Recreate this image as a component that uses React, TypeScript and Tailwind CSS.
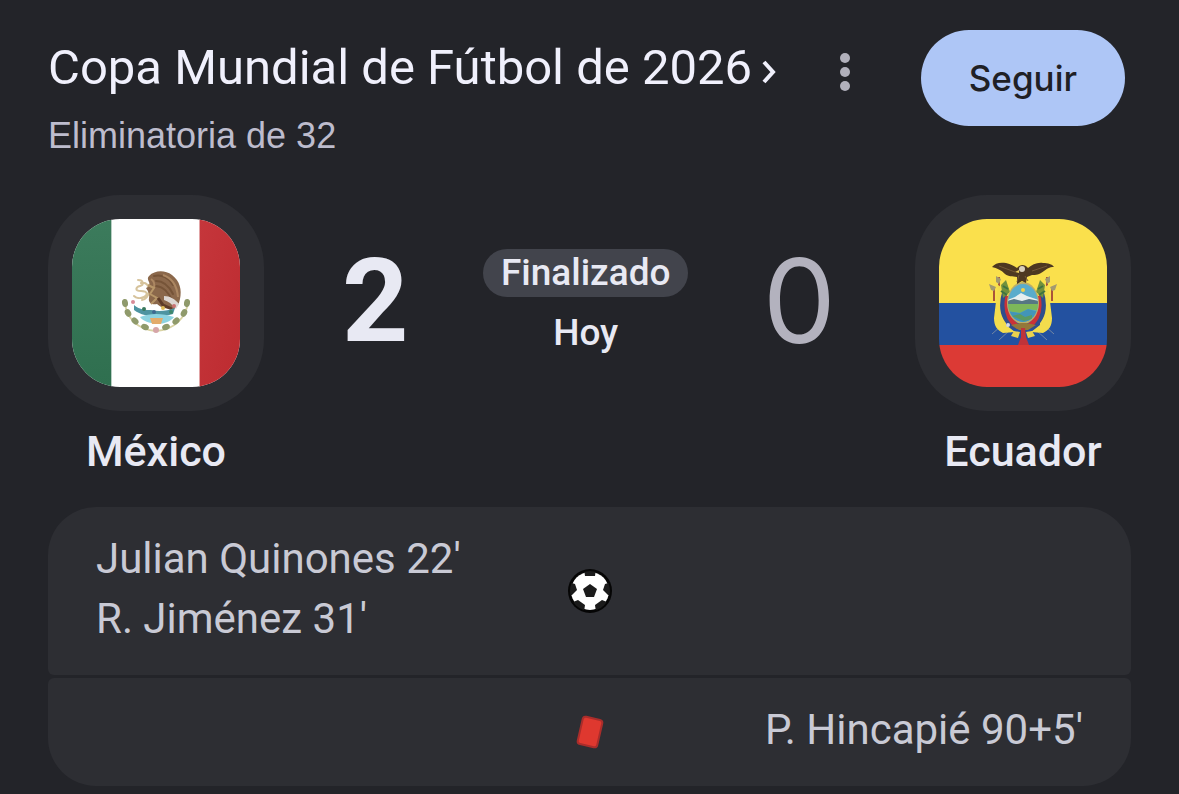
import type { ReactNode } from 'react'

interface MatchEvent {
  id: string
  home: string[]
  away: string[]
  icon: ReactNode
}

function MexicoFlag() {
  return (
    <svg viewBox="0 0 168 168" className="size-full" role="img" aria-label="Bandera de México">
      <defs>
        <linearGradient id="mx-green" x1="0" y1="0" x2="0" y2="1">
          <stop offset="0" stopColor="#3c7b5c" />
          <stop offset="1" stopColor="#2f6f4f" />
        </linearGradient>
        <linearGradient id="mx-red" x1="0" y1="0" x2="1" y2="1">
          <stop offset="0" stopColor="#c5363b" />
          <stop offset="1" stopColor="#bd2b30" />
        </linearGradient>
      </defs>
      <rect width="168" height="168" fill="#fff" />
      <rect width="39" height="168" fill="url(#mx-green)" />
      <rect x="128" width="40" height="168" fill="url(#mx-red)" />
      <rect x="39" width="1" height="168" fill="#b9cfc4" />
      <rect x="127" width="1" height="168" fill="#e2a4a6" />
      {/* laurel */}
      <path d="M53 83c1 16 13 28 31 29 18-1 30-13 32-29" fill="none" stroke="#d9d3a4" strokeWidth="2" />
      <g fill="#8f9a6b">
        <ellipse cx="53" cy="84" rx="3" ry="4" transform="rotate(-10 53 84)" />
        <ellipse cx="56" cy="94" rx="3" ry="4" transform="rotate(-30 56 94)" />
        <ellipse cx="63" cy="102" rx="3" ry="4" transform="rotate(-45 63 102)" />
        <ellipse cx="73" cy="108" rx="3" ry="4" transform="rotate(-65 73 108)" />
        <ellipse cx="115" cy="84" rx="3" ry="4" transform="rotate(10 115 84)" />
        <ellipse cx="112" cy="94" rx="3" ry="4" transform="rotate(30 112 94)" />
        <ellipse cx="104" cy="102" rx="3" ry="4" transform="rotate(45 104 102)" />
        <ellipse cx="94" cy="108" rx="3" ry="4" transform="rotate(65 94 108)" />
      </g>
      <circle cx="84" cy="111" r="3" fill="#d6a5a8" />
      {/* snake */}
      <path d="M66 61c6 0 6 5 2 6s-6 5 1 5 7 4 3 6-8 1-10-1M69 64c6-1 8 3 8 8s-4 9-7 9" fill="none" stroke="#d6c39c" strokeWidth="2" strokeLinecap="round" />
      {/* eagle */}
      <path d="M77 57c6-6 16-6 23-1 8 6 10 15 8 24-1 5-3 8-6 10-7 0-13-1-17-5-5 1-9-1-8-6 1-4-1-7-3-10 3-1 4-4 3-6-1-2-2-4 0-6z" fill="#8b684b" />
      <path d="M82 57c8-2 15 2 19 9M84 62c8 0 13 5 17 13M84 67c8 1 12 6 16 14" fill="none" stroke="#765438" strokeWidth="2" strokeLinecap="round" />
      <path d="M91 56c9 3 14 11 15 22M79 60c3 2 4 5 3 9" fill="none" stroke="#ac8762" strokeWidth="2" />
      <path d="M92 77c6 0 11 3 15 8l-3 5c-4-5-8-8-12-9z" fill="#ddd7d3" />
      <path d="M76 66l6 3-4 6 7 4-6 6" fill="none" stroke="#b79668" strokeWidth="2" />
      <path d="M86 79l5 7 9 4" fill="none" stroke="#5e3c28" strokeWidth="3" />
      {/* lake */}
      <path d="M62 86c6 5 12 5 17 5 8 2 16 1 24-2l-2 6c-12 4-28 4-39-4z" fill="#4e94a1" />
      <path d="M68 98c10-4 22-4 34 0-3 4-9 7-17 7-8-1-14-3-17-7z" fill="#8dd3e0" />
      <path d="M78 99h13l-2 6h-9z" fill="#e3ac6c" />
      <circle cx="61" cy="83" r="2" fill="#d98b98" />
      <circle cx="72" cy="90" r="2" fill="#39785c" />
      <circle cx="82" cy="93" r="2" fill="#3d6991" />
      <circle cx="91" cy="89" r="2" fill="#dfbd58" />
      <circle cx="99" cy="93" r="2" fill="#3e876b" />
      <circle cx="102" cy="87" r="2" fill="#c87272" />
    </svg>
  )
}

function EcuadorFlag() {
  return (
    <svg viewBox="0 0 168 168" className="size-full" role="img" aria-label="Bandera de Ecuador">
      <rect width="168" height="84" fill="#fae04c" />
      <rect y="84" width="168" height="42" fill="#2351a0" />
      <rect y="126" width="168" height="42" fill="#dc3a35" />
      {/* spears */}
      <path d="M53 115l9-8M60 121l11-10M115 115l-9-8M108 121l-11-10" stroke="#7286a4" />
      <path d="M60 58v17M55 68v14M108 58v17M113 68v14" stroke="#aa5539" strokeWidth="2" />
      <path d="M57 57l5 3-2 5-3-2zM50 65l7 3-2 4-3-1zM111 57l-5 3 2 5 3-2zM118 65l-7 3 2 4 3-1z" fill="#a39a70" />
      {/* draped flags */}
      <path d="M59 66l8 5v35l9 7-12 1c-6-3-9-7-9-15z" fill="#f3dc4d" />
      <path d="M109 66l-8 5v35l-9 7 12 1c6-3 9-7 9-15z" fill="#f3dc4d" />
      <path d="M66 72c-5 16-2 29 10 37M102 72c5 16 2 29-10 37" fill="none" stroke="#304d8c" strokeWidth="5" />
      <path d="M69 77c-3 14 0 24 10 31M99 77c3 14 0 24-10 31" fill="none" stroke="#c93238" strokeWidth="5" />
      <path d="M62 66l5-5 4 12-7 6zM106 66l-5-5-4 12 7 6z" fill="#70913d" />
      <path d="M62 72l6 4M64 67l5 3M106 72l-6 4M104 67l-5 3" stroke="#3e7341" strokeWidth="2" />
      {/* shield */}
      <ellipse cx="84" cy="84" rx="16" ry="21" fill="#b9ad6c" />
      <clipPath id="ec-shield">
        <ellipse cx="84" cy="84" rx="15" ry="19" />
      </clipPath>
      <g clipPath="url(#ec-shield)">
        <rect x="68" y="64" width="32" height="41" fill="#5aaccc" />
        <path d="M68 81l8-3 6-4 6 3 12 4v4H68z" fill="#e7eff0" />
        <path d="M68 82l7-2 8 2 7-2 10 2v3H68z" fill="#567783" />
        <path d="M68 85h32v7l-11-2-8 4-13-2z" fill="#7db75a" />
        <path d="M68 92l13 2 8-4 11 3v12H68z" fill="#4295b8" />
        <path d="M73 97l8-2 5 3 7-2v4l-8 2z" fill="#5a9a63" />
      </g>
      <circle cx="84" cy="71" r="2" fill="#f3d24c" />
      {/* fasces and ribbons */}
      <path d="M72 106l10-2h5l10 2-8 5h-9z" fill="#94783a" />
      <path d="M75 112l6 1-2 6-7-2zM93 112l-6 1 2 6 7-2z" fill="#ead24e" />
      <path d="M82 109h4l1 9 3 8H79l3-8z" fill="#bf333a" />
      <circle cx="69" cy="106" r="2" fill="#d6d9e3" />
      {/* condor */}
      <path d="M53 48c3-4 8-5 14-4 5 1 8 3 11 5 3-4 8-4 11 0 4-3 9-6 15-5 5 0 9 1 11 4-5 0-7 2-10 4-5 4-8 4-12 4l-5 2-1 6-4-2-5 3v-7c-5-1-8 0-12-3-4-4-8-6-13-7z" fill="#4d3821" />
      <path d="M60 47l16 6M93 52l15-5M80 56l-2 7M86 57l3 5" stroke="#745937" strokeWidth="1" />
      <circle cx="83" cy="50" r="3" fill="#d8cfbc" />
      <path d="M80 51l-4 2 4 1z" fill="#e9ca59" />
    </svg>
  )
}

function BallIcon() {
  return (
    <svg viewBox="0 0 46 46" className="size-[46px]" role="img" aria-label="Goles">
      <clipPath id="ball">
        <circle cx="23" cy="23" r="20" />
      </clipPath>
      <circle cx="23" cy="23" r="22" fill="#050505" />
      <circle cx="23" cy="23" r="19" fill="#fff" />
      <g fill="#1b1b1b" clipPath="url(#ball)">
        <path d="M23 16l7 5-3 8h-8l-3-8z" />
        <path d="M17 1h12l-1 7H18z" />
        <path d="M1 14l7 2 2 6-5 5H1z" />
        <path d="M45 14l-7 2-2 6 5 5h4z" />
        <path d="M6 34l5-2 7 5-1 7-6-1z" />
        <path d="M40 34l-5-2-7 5 1 7 6-1z" />
      </g>
    </svg>
  )
}

function RedCardIcon() {
  return (
    <svg viewBox="0 0 32 36" className="h-9 w-8" role="img" aria-label="Tarjetas rojas">
      <rect x="6" y="4" width="20" height="28" rx="3" fill="#df382f" stroke="#a92d2b" strokeWidth="2" transform="rotate(13 16 18)" />
    </svg>
  )
}

const events: MatchEvent[] = [
  { id: 'goals', home: ["Julian Quinones 22'", "R. Jiménez 31'"], away: [], icon: <BallIcon /> },
  { id: 'cards', home: [], away: ["P. Hincapié 90+5'"], icon: <RedCardIcon /> },
]

function Team({ name, flag }: { name: string; flag: ReactNode }) {
  return (
    <div className="flex w-[216px] shrink-0 flex-col items-center">
      <div className="size-[216px] rounded-[72px] bg-[#2d2e33] p-6">
        <div className="size-[168px] overflow-hidden rounded-[48px]">{flag}</div>
      </div>
      <h2 className="mt-3 text-[43px] leading-[56px] font-medium text-[#e8e9f3]">{name}</h2>
    </div>
  )
}

export default function App() {
  return (
    <div className="min-h-screen bg-[#232429] px-12 pb-2 font-[Roboto,sans-serif]">
      {/* Header */}
      <header className="flex items-start justify-between pt-[30px] pr-[6px]">
        <div>
          <h1 className="text-[49px] leading-[76px] text-[#f0f0fc]">
            <a href="#torneo" className="flex items-center gap-[10px]">
              Copa Mundial de Fútbol de 2026
              <svg viewBox="0 0 14 24" className="mt-2 h-6 w-[14px]" fill="none" stroke="currentColor" strokeWidth="4" aria-hidden="true">
                <path d="M2 2l9 10-9 10" />
              </svg>
            </a>
          </h1>
          <p className="font-['Liberation_Sans',sans-serif] text-[36px] leading-[60px] text-[#bdbccd]">Eliminatoria de 32</p>
        </div>
        <div className="flex items-center gap-[58px]">
          <button type="button" aria-label="Más opciones" className="flex w-9 justify-center pb-3">
            <svg viewBox="0 0 10 38" className="h-[38px] w-[10px]" fill="#b1b0bb">
              <circle cx="5" cy="5" r="5" />
              <circle cx="5" cy="19" r="5" />
              <circle cx="5" cy="33" r="5" />
            </svg>
          </button>
          <button type="button" className="h-24 rounded-full bg-[#aec6f6] px-12 font-[Inter,sans-serif] text-[35px] font-medium text-[#1f2025]">
            Seguir
          </button>
        </div>
      </header>

      {/* Scoreboard */}
      <section className="mt-[29px] flex items-start">
        <Team name="México" flag={<MexicoFlag />} />
        <div className="flex flex-1 items-start justify-between pt-[54px] pr-[79px] pl-[78px]">
          <span className="text-[116px] leading-[104px] font-bold text-[#e8e9f3]">2</span>
          <div className="flex flex-col items-center text-[37px] font-medium text-[#e8e9f3]">
            <span className="rounded-full bg-[#42444c] px-[18px] leading-[48px]">Finalizado</span>
            <span className="mt-3 leading-[48px]">Hoy</span>
          </div>
          <span className="font-[Inter,sans-serif] text-[116px] leading-[104px] text-[#b3b2be]">0</span>
        </div>
        <Team name="Ecuador" flag={<EcuadorFlag />} />
      </section>

      {/* Match events */}
      <ul className="mt-7 space-y-[3px] text-[42px] leading-[60px] text-[#c9cad5]">
        {events.map((event) => (
          <li
            key={event.id}
            className="grid grid-cols-[1fr_auto_1fr] items-center rounded-[6px] bg-[#2d2e33] px-12 py-[22px] first:rounded-t-[48px] last:rounded-b-[48px]"
          >
            <div className="pb-1">
              {event.home.map((line) => (
                <p key={line}>{line}</p>
              ))}
            </div>
            {event.icon}
            <div className="pb-1 text-right">
              {event.away.map((line) => (
                <p key={line}>{line}</p>
              ))}
            </div>
          </li>
        ))}
      </ul>
    </div>
  )
}
